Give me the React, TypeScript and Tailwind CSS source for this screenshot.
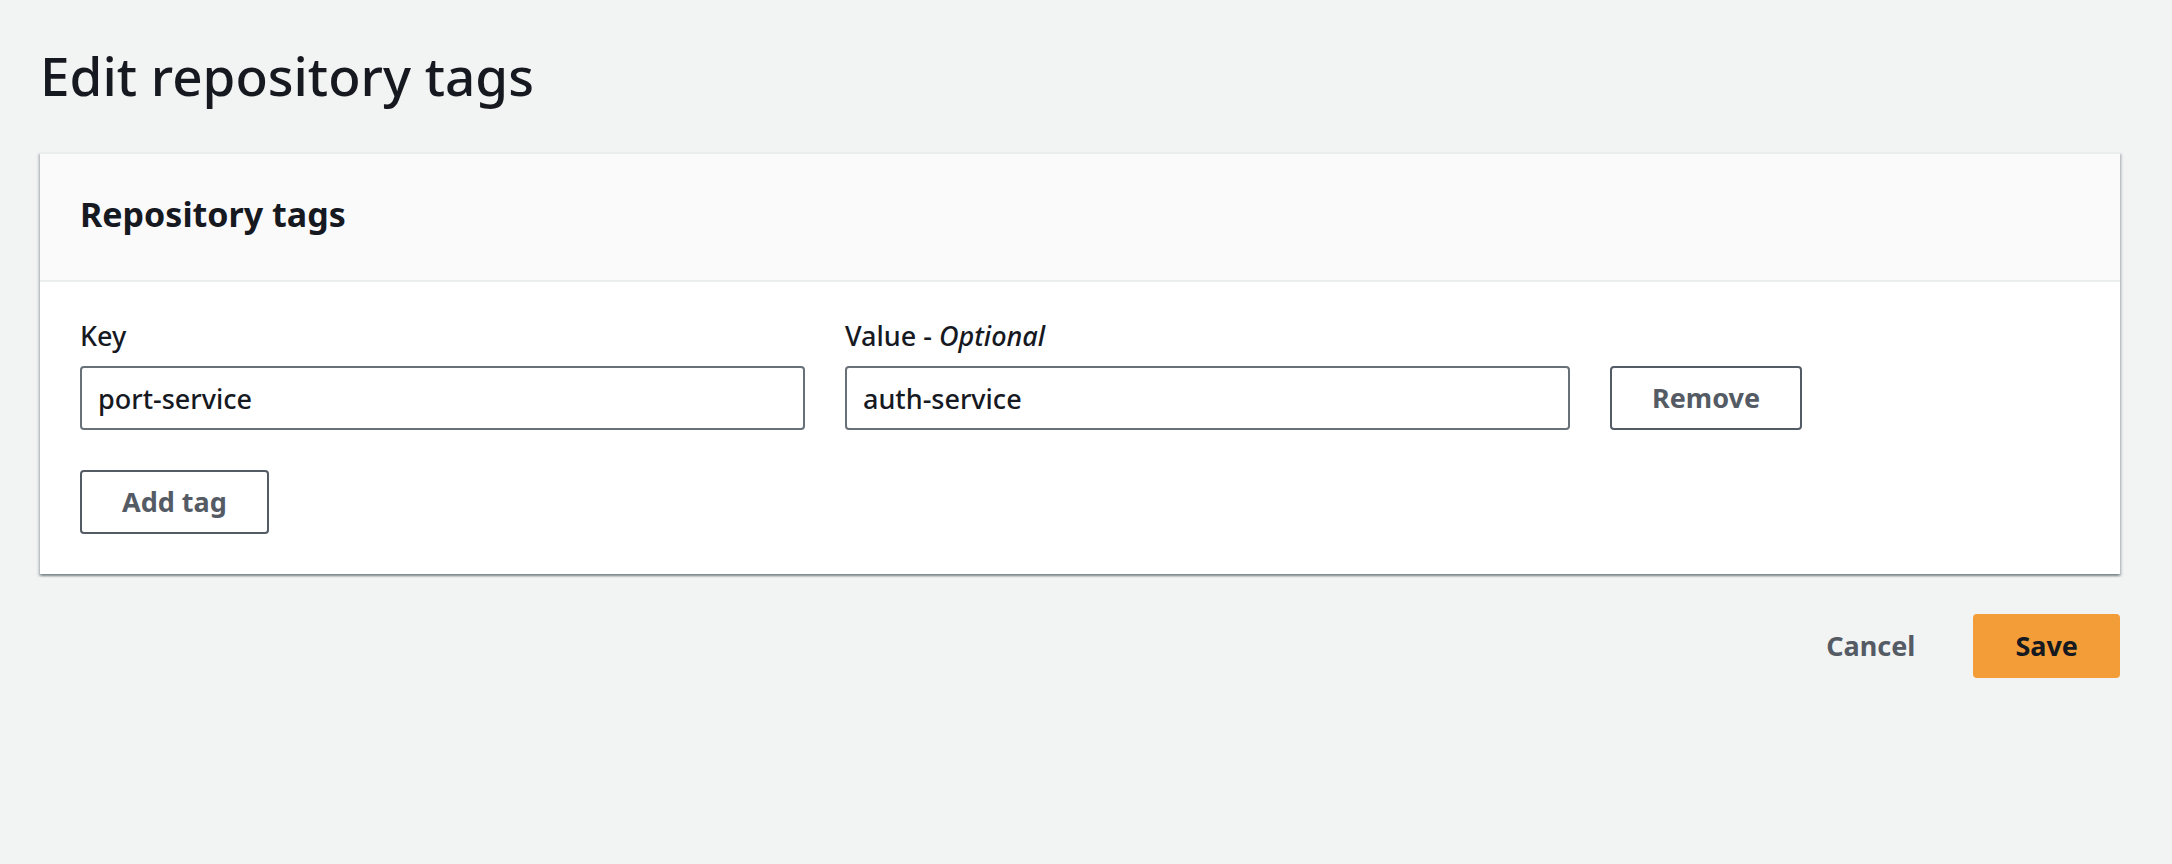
import React, { useState } from "react";

const label = "mb-2 block text-[27px] leading-[44px] font-medium";
const field =
  "h-16 w-full rounded-[4px] border-2 border-[#687078] bg-white px-4 text-[27px] font-medium text-[#16191f]";
const button = "h-16 rounded-[4px] border-2 px-10 text-[27px] font-bold";
const outlined = "border-[#545b64] bg-white text-[#545b64]";

export default function App() {
  const [key, setKey] = useState("port-service");
  const [value, setValue] = useState("auth-service");

  return (
    <main className="min-h-screen bg-[#f2f3f3] pt-10 pr-[52px] pl-10 font-['Noto_Sans',sans-serif] text-[#16191f]">
      <h1 className="text-[53px] leading-[72px] font-medium">Edit repository tags</h1>
      <form className="mt-10">
        <section className="border-t-2 border-[#eaeded] bg-white shadow-[0_2px_2px_0_rgba(0,28,36,0.3),2px_2px_2px_0_rgba(0,28,36,0.15),-2px_2px_2px_0_rgba(0,28,36,0.15)]">
          <header className="border-b-2 border-[#eaeded] bg-[#fafafa] px-10 pt-[38px] pb-11">
            <h2 className="text-[34px] leading-[44px] font-bold">Repository tags</h2>
          </header>
          <div className="px-10 pt-8 pb-10">
            <div className="grid grid-cols-8 items-end gap-10">
              <div className="col-span-3">
                <label htmlFor="key" className={label}>Key</label>
                <input id="key" className={field} value={key} onChange={(e) => setKey(e.target.value)} />
              </div>
              <div className="col-span-3">
                <label htmlFor="value" className={label}>Value - <i>Optional</i></label>
                <input id="value" className={field} value={value} onChange={(e) => setValue(e.target.value)} />
              </div>
              <div className="col-span-2">
                <button type="button" className={`${button} ${outlined}`}>Remove</button>
              </div>
            </div>
            <button type="button" className={`${button} ${outlined} mt-10`}>Add tag</button>
          </div>
        </section>
        <div className="mt-10 flex justify-end gap-4">
          <button type="button" className={`${button} border-transparent text-[#545b64]`}>Cancel</button>
          <button type="submit" onClick={(e) => e.preventDefault()} className={`${button} border-[#f29d38] bg-[#f29d38]`}>Save</button>
        </div>
      </form>
    </main>
  );
}
